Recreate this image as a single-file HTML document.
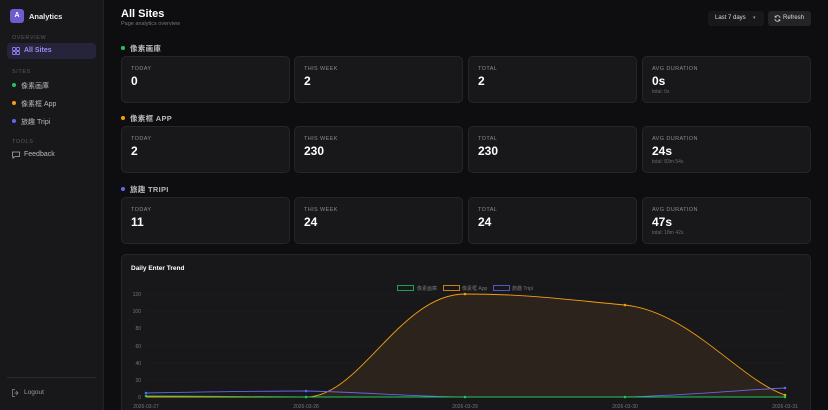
<!DOCTYPE html>
<html style="overflow:hidden;height:410px"><head><meta charset="utf-8"><style>
*{box-sizing:border-box;margin:0;padding:0}
body{width:828px;height:410px;overflow:hidden;background:#0e0e10;font-family:"Liberation Sans","Noto Sans CJK SC",sans-serif;color:#e5e5e5;position:relative}
.sb{position:absolute;left:0;top:0;width:104px;height:410px;background:#18181b;border-right:1px solid #222225}
.abs{position:absolute}
.sec{font-size:5.5px;letter-spacing:.6px;color:#5a5a60}
.nav{font-size:7px;color:#b8b8bd}
.dot{display:inline-block;width:4px;height:4px;border-radius:50%;margin-right:5px;vertical-align:1px}
.card{position:absolute;width:169px;height:47px;background:#18181b;border:1px solid #26262a;border-radius:5px}
.card .l{position:absolute;left:9px;top:9px;font-size:5.5px;letter-spacing:.4px;color:#8a8a90}
.card .v{position:absolute;left:9px;top:17px;font-size:12px;font-weight:bold;color:#fff}
.card .s{position:absolute;left:9px;top:32px;font-size:5px;color:#6a6a70}
.h{position:absolute;left:121px;font-size:7.5px;font-weight:bold;color:#b8b8bd;letter-spacing:.3px}
</style></head><body>
<div class="sb">
 <div class="abs" style="left:10px;top:9px;width:14px;height:14px;border-radius:3px;background:#6d5bd0;color:#fff;font-size:7px;font-weight:bold;text-align:center;line-height:14px">A</div>
 <div class="abs" style="left:29px;top:12px;font-size:7.5px;font-weight:bold;color:#eee">Analytics</div>
 <div class="abs sec" style="left:12px;top:35px">OVERVIEW</div>
 <div class="abs" style="left:7px;top:43px;width:89px;height:16px;border-radius:4px;background:#25243a"></div>
 <svg class="abs" style="left:12px;top:47px" width="8" height="8" viewBox="0 0 8 8" fill="none" stroke="#8b7cf0" stroke-width=".9"><rect x=".5" y=".5" width="3" height="3" rx=".8"/><rect x="4.5" y=".5" width="3" height="3" rx=".8"/><rect x=".5" y="4.5" width="3" height="3" rx=".8"/><rect x="4.5" y="4.5" width="3" height="3" rx=".8"/></svg>
 <div class="abs nav" style="left:24px;top:47px;color:#9b8cf5;font-weight:bold">All Sites</div>
 <div class="abs sec" style="left:12px;top:69px">SITES</div>
 <div class="abs nav" style="left:12px;top:81px"><span class="dot" style="background:#22c55e"></span>像素画庫</div>
 <div class="abs nav" style="left:12px;top:99px"><span class="dot" style="background:#f59e0b"></span>像素框 App</div>
 <div class="abs nav" style="left:12px;top:117px"><span class="dot" style="background:#6366f1"></span>旅趣 Tripi</div>
 <div class="abs sec" style="left:12px;top:139px">TOOLS</div>
 <svg class="abs" style="left:12px;top:151px" width="8" height="8" viewBox="0 0 8 8" fill="none" stroke="#aaa" stroke-width=".8"><path d="M.5 1h7v4.5H3L1 7.2V5.5H.5z"/></svg>
 <div class="abs nav" style="left:24px;top:151px">Feedback</div>
 <div class="abs" style="left:7px;top:377px;width:89px;height:1px;background:#2a2a2e"></div>
 <svg class="abs" style="left:12px;top:389px" width="8" height="8" viewBox="0 0 8 8" fill="none" stroke="#888" stroke-width=".8"><path d="M3 .5H.5v7H3M4 2l2 2-2 2M6 4H2.5"/></svg>
 <div class="abs nav" style="left:24px;top:389px;font-size:6.5px;color:#999">Logout</div>
</div>

<div class="abs" style="left:121px;top:8px;font-size:11px;font-weight:bold;color:#fff">All Sites</div>
<div class="abs" style="left:121px;top:21px;font-size:5.5px;color:#777">Page analytics overview</div>
<div class="abs" style="left:708px;top:11px;width:56px;height:15px;background:#18181b;border-radius:3px;font-size:6px;color:#ddd;line-height:15px;padding-left:7px">Last 7 days <span style="position:absolute;left:45px;top:0;color:#999;font-size:5px">▾</span></div>
<div class="abs" style="left:768px;top:11px;width:43px;height:15px;background:#242427;border-radius:3px"></div>
<div class="abs" style="left:783px;top:15px;font-size:6px;color:#ddd">Refresh</div>
<svg class="abs" style="left:774px;top:15px" width="7" height="7" viewBox="0 0 8 8" fill="none" stroke="#ccc" stroke-width=".9"><path d="M7 3.5A3 3 0 0 0 1.5 2.2M1 4.5A3 3 0 0 0 6.5 5.8M1.3 .8v1.7H3M6.7 7.2V5.5H5"/></svg>

<div class="h" style="top:43px"><span class="dot" style="background:#22c55e"></span>像素画庫</div>
<div class="card" style="left:121px;top:56px"><div class="l">TODAY</div><div class="v">0</div></div>
<div class="card" style="left:294px;top:56px"><div class="l">THIS WEEK</div><div class="v">2</div></div>
<div class="card" style="left:468px;top:56px"><div class="l">TOTAL</div><div class="v">2</div></div>
<div class="card" style="left:642px;top:56px"><div class="l">AVG DURATION</div><div class="v">0s</div><div class="s">total: 0s</div></div>

<div class="h" style="top:113px"><span class="dot" style="background:#f59e0b"></span>像素框 APP</div>
<div class="card" style="left:121px;top:126px"><div class="l">TODAY</div><div class="v">2</div></div>
<div class="card" style="left:294px;top:126px"><div class="l">THIS WEEK</div><div class="v">230</div></div>
<div class="card" style="left:468px;top:126px"><div class="l">TOTAL</div><div class="v">230</div></div>
<div class="card" style="left:642px;top:126px"><div class="l">AVG DURATION</div><div class="v">24s</div><div class="s">total: 83m 54s</div></div>

<div class="h" style="top:184px"><span class="dot" style="background:#6366f1"></span>旅趣 TRIPI</div>
<div class="card" style="left:121px;top:197px"><div class="l">TODAY</div><div class="v">11</div></div>
<div class="card" style="left:294px;top:197px"><div class="l">THIS WEEK</div><div class="v">24</div></div>
<div class="card" style="left:468px;top:197px"><div class="l">TOTAL</div><div class="v">24</div></div>
<div class="card" style="left:642px;top:197px"><div class="l">AVG DURATION</div><div class="v">47s</div><div class="s">total: 18m 42s</div></div>

<div class="card" style="left:121px;top:254px;width:690px;height:162px"></div>
<div class="abs" style="left:131px;top:265px;font-size:6.5px;font-weight:bold;color:#fff">Daily Enter Trend</div>
<svg class="abs" style="left:0;top:0" width="828" height="410" font-family="Liberation Sans" font-size="5" fill="#777">
 <g stroke="#1f1f23" stroke-width=".5">
  <line x1="146" y1="294" x2="785" y2="294"/><line x1="146" y1="311" x2="785" y2="311"/><line x1="146" y1="328" x2="785" y2="328"/><line x1="146" y1="346" x2="785" y2="346"/><line x1="146" y1="363" x2="785" y2="363"/><line x1="146" y1="380" x2="785" y2="380"/><line x1="146" y1="397" x2="785" y2="397"/>
 </g>
 <g text-anchor="end"><text x="141" y="296">120</text><text x="141" y="313">100</text><text x="141" y="330">80</text><text x="141" y="348">60</text><text x="141" y="365">40</text><text x="141" y="382">20</text><text x="141" y="399">0</text></g>
 <g text-anchor="middle"><text x="146" y="408">2026-03-27</text><text x="306" y="408">2026-03-28</text><text x="465" y="408">2026-03-29</text><text x="625" y="408">2026-03-30</text><text x="785" y="408">2026-03-31</text></g>
 <rect x="397.5" y="285.5" width="16" height="5" fill="none" stroke="#22c55e" stroke-width=".8"/><text x="417" y="290">像素画庫</text>
 <rect x="443.5" y="285.5" width="16" height="5" fill="none" stroke="#f59e0b" stroke-width=".8"/><text x="462" y="290">像素框 App</text>
 <rect x="493.5" y="285.5" width="16" height="5" fill="none" stroke="#6366f1" stroke-width=".8"/><text x="512" y="290">旅趣 Tripi</text>
 <path d="M146 397 L306 397 C360 397 400 294 465 294 C530 294 570 300 625 305 C690 312 740 380 785 395 L785 397 Z" fill="#2c231d"/>
 <path d="M146 397 L306 397 C360 397 400 294 465 294 C530 294 570 300 625 305 C690 312 740 380 785 395" fill="none" stroke="#f59e0b" stroke-width=".9"/>
 <path d="M146 393 C200 392 260 391 306 391 C360 392 420 397 465 397 L625 397 C680 396 740 390 785 388" fill="none" stroke="#6366f1" stroke-width=".9"/>
 <path d="M146 396 C200 396 260 397 306 397 L785 397" fill="none" stroke="#22c55e" stroke-width=".9"/>
 <g fill="#6366f1"><circle cx="146" cy="393" r="1.3"/><circle cx="306" cy="391" r="1.3"/><circle cx="785" cy="388" r="1.3"/></g>
 <g fill="#f59e0b"><circle cx="465" cy="294" r="1.3"/><circle cx="625" cy="305" r="1.3"/><circle cx="785" cy="395" r="1.3"/></g>
 <g fill="#22c55e"><circle cx="146" cy="396" r="1.3"/><circle cx="306" cy="397" r="1.3"/><circle cx="465" cy="397" r="1.3"/><circle cx="625" cy="397" r="1.3"/><circle cx="785" cy="397" r="1.3"/></g>
</svg>
</body></html>
